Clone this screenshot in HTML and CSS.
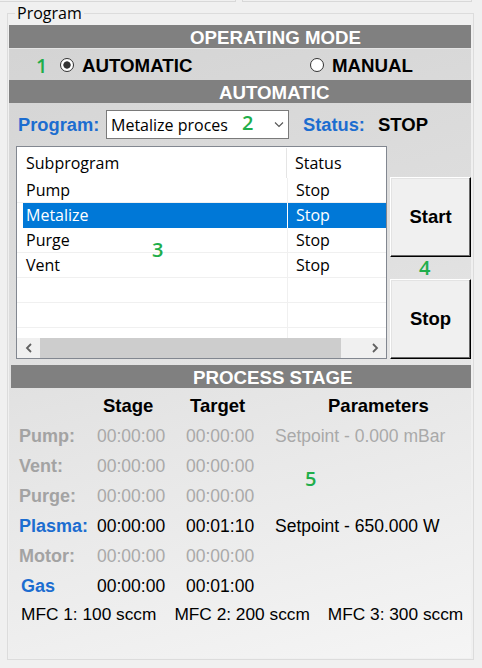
FILE: index.html
```html
<!DOCTYPE html>
<html>
<head>
<meta charset="utf-8">
<link rel="stylesheet" href="styles.css">
</head>
<body>
<div class="tabs"><div class="tab tab1"></div><div class="tab tab2"></div></div>
<fieldset class="group">
  <legend>Program</legend>
  <div class="panel">
    <div class="bar bar-mode">OPERATING MODE</div>
    <div class="mode-row">
      <span class="mark mark1">1</span>
      <label class="radio radio-auto"><span class="dot on"></span>AUTOMATIC</label>
      <label class="radio"><span class="dot"></span>MANUAL</label>
    </div>
    <div class="bar bar-auto">AUTOMATIC</div>
    <div class="prog-row">
      <span class="lbl lbl-prog">Program:</span>
      <div class="combo">
        <span class="combo-text">Metalize proces</span>
        <span class="mark mark2">2</span>
        <svg class="chev" width="10" height="6" viewBox="0 0 10 6"><polyline points="1,0.5 5,4.5 9,0.5" fill="none" stroke="#555" stroke-width="1.1"/></svg>
      </div>
      <span class="lbl lbl-status">Status:</span>
      <span class="stop">STOP</span>
    </div>
    <div class="middle">
      <div class="list">
        <div class="lv-head"><div class="c1">Subprogram</div><div class="c2">Status</div></div>
        <div class="lv-body">
          <div class="row"><div class="c1">Pump</div><div class="c2">Stop</div></div>
          <div class="row sel"><div class="c1">Metalize</div><div class="c2">Stop</div></div>
          <div class="row"><div class="c1">Purge</div><div class="c2">Stop</div></div>
          <div class="row"><div class="c1">Vent</div><div class="c2">Stop</div></div>
          <div class="row"><div class="c1"></div><div class="c2"></div></div>
          <div class="row"><div class="c1"></div><div class="c2"></div></div>
          <div class="row"><div class="c1"></div><div class="c2"></div></div>
        </div>
        <div class="hscroll">
          <div class="arrow"><svg width="8" height="10" viewBox="0 0 8 10"><polyline points="6,1 2,5 6,9" fill="none" stroke="#606060" stroke-width="1.8"/></svg></div>
          <div class="thumb"></div>
          <div class="track"></div>
          <div class="arrow"><svg width="8" height="10" viewBox="0 0 8 10"><polyline points="2,1 6,5 2,9" fill="none" stroke="#606060" stroke-width="1.8"/></svg></div>
        </div>
        <span class="mark mark3">3</span>
      </div>
      <div class="buttons">
        <button class="btn">Start</button>
        <span class="mark mark4">4</span>
        <button class="btn">Stop</button>
      </div>
    </div>
    <div class="bar bar-process">PROCESS STAGE</div>
    <div class="stage">
      <div class="grid">
        <div></div>
        <div class="hd hd-stage">Stage</div>
        <div class="hd hd-target">Target</div>
        <div class="hd hd-param">Parameters</div>

        <div class="lab dim">Pump:</div>
        <div class="val dim">00:00:00</div>
        <div class="val dim">00:00:00</div>
        <div class="val dim">Setpoint - 0.000 mBar</div>

        <div class="lab dim">Vent:</div>
        <div class="val dim">00:00:00</div>
        <div class="val dim">00:00:00</div>
        <div></div>

        <div class="lab dim">Purge:</div>
        <div class="val dim">00:00:00</div>
        <div class="val dim">00:00:00</div>
        <div></div>

        <div class="lab blue">Plasma:</div>
        <div class="val">00:00:00</div>
        <div class="val">00:01:10</div>
        <div class="val">Setpoint - 650.000 W</div>

        <div class="lab dim">Motor:</div>
        <div class="val dim">00:00:00</div>
        <div class="val dim">00:00:00</div>
        <div></div>

        <div class="lab blue lab-gas">Gas</div>
        <div class="val">00:00:00</div>
        <div class="val">00:01:00</div>
        <div></div>
      </div>
      <div class="mfc">
        <span>MFC 1: 100 sccm</span>
        <span>MFC 2: 200 sccm</span>
        <span>MFC 3: 300 sccm</span>
      </div>
      <span class="mark mark5">5</span>
    </div>
  </div>
</fieldset>
</body>
</html>
```

FILE: styles.css
```css
html, body {
  margin: 0;
  padding: 0;
}
body {
  background: #f0f0f0;
  font-family: "Liberation Sans", Arial, sans-serif;
  color: #000;
  width: 482px;
  height: 668px;
  overflow: hidden;
}

.tabs {
  display: flex;
  height: 2px;
}
.tab {
  box-sizing: border-box;
  height: 2px;
  border-bottom: 1px solid #d8d8d8;
}
.tab1 {
  width: 236px;
  border-right: 1px solid #d8d8d8;
}
.tab2 {
  width: 230px;
  margin-left: 6px;
  border-left: 1px solid #d8d8d8;
  border-right: 1px solid #d8d8d8;
}

.group {
  margin: 1px 0 0 7px;
  width: 467px;
  box-sizing: border-box;
  border: 1px solid #dcdcdc;
  padding: 2px 2px 1px 1px;
  min-width: 0;
}
.group legend {
  font-family: "Open Sans", sans-serif;
  font-size: 16px;
  line-height: 20px;
  padding: 0 2px;
  margin-left: 6px;
  color: #000;
}

.panel {
  height: 633px;
  display: flex;
  flex-direction: column;
  background: linear-gradient(165deg, #d3d3d3 0%, #dedede 40%, #e8e8e8 65%, #f5f5f5 100%);
}

.bar {
  flex: none;
  height: 23px;
  box-sizing: border-box;
  background: #808080;
  color: #fff;
  font-weight: bold;
  font-size: 18.7px;
  line-height: 20px;
  padding-top: 3px;
  white-space: nowrap;
}
.bar-mode { padding-left: 181px; }
.bar-auto { padding-left: 210px; }
.bar-process {
  margin-left: 2px;
  margin-top: 6px;
  padding-left: 182px;
}

.mark {
  color: #1fae4b;
  font-family: "Open Sans", sans-serif;
  font-weight: 600;
  font-size: 20px;
  line-height: 20px;
}

.mode-row {
  flex: none;
  height: 32px;
  box-sizing: border-box;
  display: flex;
  align-items: center;
  padding-left: 27px;
  padding-top: 3px;
  border-top: 1px solid #e4e4e4;
}
.mark1 {
  width: 24px;
}
.radio {
  display: flex;
  align-items: center;
  font-weight: bold;
  font-size: 18.7px;
  line-height: 20px;
  color: #000;
}
.radio-auto {
  width: 250px;
}
.dot {
  width: 14px;
  height: 14px;
  box-sizing: border-box;
  border-radius: 50%;
  border: 1px solid #333;
  background: #fff;
  margin-right: 8px;
  margin-top: -2px;
}
.dot.on {
  background: radial-gradient(circle at center, #333 0 3.3px, #fff 4px);
}

.prog-row {
  flex: none;
  height: 43px;
  display: flex;
  align-items: center;
  padding-left: 9px;
}
.lbl {
  color: #1c6dd0;
  font-weight: bold;
  font-size: 18.3px;
}
.lbl-prog {
  width: 88px;
}
.combo {
  width: 183px;
  height: 29px;
  box-sizing: border-box;
  border: 1px solid #7a7a7a;
  background: #fff;
  display: flex;
  align-items: center;
  padding-left: 4px;
}
.combo-text {
  font-family: "Open Sans", sans-serif;
  font-size: 16px;
  line-height: 20px;
  color: #000;
}
.mark2 {
  margin-left: 14px;
  margin-top: -3px;
}
.chev {
  margin-left: auto;
  margin-right: 4px;
}
.lbl-status {
  margin-left: 14px;
  width: 75px;
}
.stop {
  font-weight: bold;
  font-size: 18.5px;
}

.middle {
  flex: none;
  display: flex;
  height: 213px;
}
.list {
  position: relative;
  margin-left: 7px;
  width: 371px;
  height: 213px;
  box-sizing: border-box;
  border: 1px solid #828790;
  background: #fff;
  font-family: "Open Sans", sans-serif;
  font-size: 16px;
  display: flex;
  flex-direction: column;
}
.lv-head {
  flex: none;
  display: flex;
  height: 31px;
  line-height: 31px;
  padding-top: 1px;
  box-sizing: border-box;
}
.lv-head .c1 {
  width: 270px;
  padding-left: 9px;
  box-sizing: border-box;
  border-right: 1px solid #e5e5e5;
}
.lv-head .c2 {
  padding-left: 8px;
}
.lv-body {
  flex: none;
  height: 160px;
  overflow: hidden;
}
.row {
  display: flex;
  height: 25px;
  line-height: 24px;
}
.row .c1, .row .c2 {
  box-sizing: border-box;
  height: 25px;
  border-bottom: 1px solid #f0f0f0;
}
.row .c1 {
  width: 271px;
  padding-left: 9px;
  border-right: 1px solid #f0f0f0;
}
.row .c2 {
  flex: 1;
  padding-left: 8px;
}
.row.sel .c1 {
  background: linear-gradient(to right, #fff 6px, #0078d7 6px);
  border-bottom-color: transparent;
  border-right-color: #fff;
  color: #fff;
}
.row.sel .c2 {
  background: #0078d7;
  border-bottom-color: #0078d7;
  color: #fff;
}
.hscroll {
  flex: none;
  display: flex;
  height: 20px;
  background: #f0f0f0;
}
.arrow {
  width: 23px;
  display: flex;
  align-items: center;
  justify-content: center;
}
.thumb {
  width: 301px;
  background: #cdcdcd;
}
.track {
  flex: 1;
}
.mark3 {
  position: absolute;
  left: 135px;
  top: 93px;
}

.buttons {
  margin-left: 3px;
  width: 81px;
  padding-top: 31px;
  display: flex;
  flex-direction: column;
}
.btn {
  width: 81px;
  height: 80px;
  box-sizing: border-box;
  background: #f0f0f0;
  border: 1px solid;
  border-color: #fff #000 #000 #fff;
  box-shadow: inset -1px -1px 0 #696969, inset 1px 1px 0 #e3e3e3;
  font-family: "Liberation Sans", Arial, sans-serif;
  font-weight: bold;
  font-size: 18.5px;
  color: #000;
  padding: 0;
  margin: 0;
}
.mark4 {
  height: 22px;
  line-height: 22px;
  padding-left: 29px;
}

.stage {
  position: relative;
  flex: 1;
}
.grid {
  display: grid;
  grid-template-columns: 78px 89px 89px 1fr;
  grid-auto-rows: 30px;
  line-height: 30px;
  padding-left: 10px;
  margin-top: 3px;
  font-size: 17.5px;
  white-space: nowrap;
}
.hd {
  font-weight: bold;
  font-size: 18.5px;
  color: #000;
}
.hd-stage { padding-left: 6px; }
.hd-target { padding-left: 4px; }
.hd-param { padding-left: 53px; }
.lab {
  font-weight: bold;
  font-size: 18px;
}
.lab-gas { padding-left: 2px; }
.dim { color: #a6a6a6; }
.lab.dim { color: #a3a3a3; }
.blue { color: #1c6dd0; }
.val { color: #000; }
.val.dim { color: #a9a9a9; }
.mfc {
  display: flex;
  gap: 18px;
  padding-left: 12px;
  font-size: 17.3px;
  line-height: 26px;
  white-space: nowrap;
}
.mark5 {
  position: absolute;
  left: 296px;
  top: 81px;
}
```
